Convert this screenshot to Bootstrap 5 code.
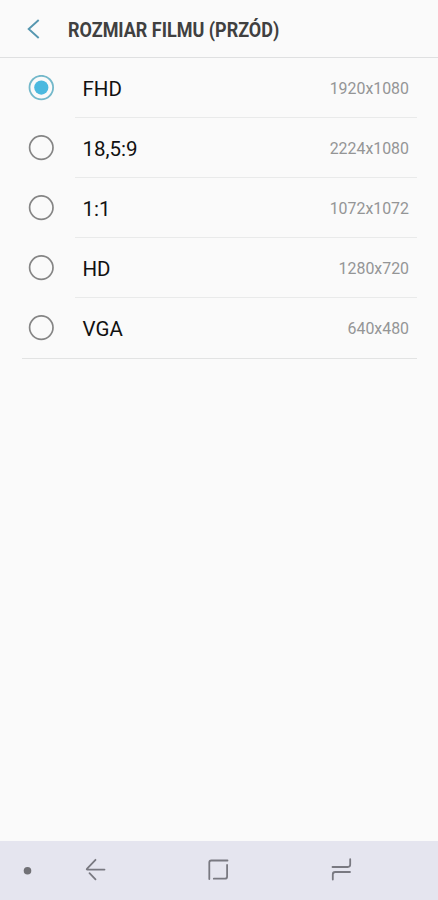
<!DOCTYPE html>
<html lang="pl">
<head>
<meta charset="utf-8">
<meta name="viewport" content="width=device-width, initial-scale=1">
<title>Rozmiar filmu (przód)</title>
<link href="https://cdn.jsdelivr.net/npm/bootstrap@5.3.0/dist/css/bootstrap.min.css" rel="stylesheet">
<style>
body { font-family: Roboto, "Liberation Sans", sans-serif; background: #fafafa; }
.topbar { height: 58px; border-bottom: 1px solid #dfe0e1; padding-left: 26px; }
.title { font-size: 20px; font-weight: 700; line-height: 24px; color: #404040; margin: 2px 0 0 27px; white-space: nowrap; transform: scaleX(.899); transform-origin: left center; }
.options { padding: 0 21px 0 22px; }
.option { height: 60px; }
.option:last-child { height: 61px; border-bottom: 1px solid #e2e3e3; }
.radio-icon { margin: 0 0 1px 6px; }
.option-body { margin-left: 21px; padding: 2px 8px 0 7.500px; border-bottom: 1px solid #e9eaea; }
.option:last-child .option-body { border-bottom: 0; }
.option-name { font-size: 20.500px; line-height: 28px; color: #111; }
.option-size { font-size: 15.900px; color: #949596; }
.sysbar { height: 59px; background: #e5e5ef; }
</style>
</head>
<body class="vh-100 d-flex flex-column overflow-hidden">
<header class="topbar d-flex align-items-center flex-shrink-0">
  <svg width="15" height="22" viewBox="0 0 15 22" fill="none" stroke="#5697b0" stroke-width="1.9"><path d="M12.7 2 2.7 11l10 9"/></svg>
  <h1 class="title">ROZMIAR FILMU (PRZÓD)</h1>
</header>
<main class="options flex-grow-1">
  <div class="option d-flex align-items-center">
    <svg class="radio-icon flex-shrink-0" width="26" height="26" viewBox="0 0 26 26"><circle cx="13.3" cy="12.600" r="11.8" fill="none" stroke="#73b8ca" stroke-width="1.8"/><circle cx="13.3" cy="12.600" r="7.1" fill="#4bb9df"/></svg>
    <div class="option-body d-flex flex-grow-1 h-100 align-items-center justify-content-between"><span class="option-name">FHD</span><span class="option-size">1920x1080</span></div>
  </div>
  <div class="option d-flex align-items-center">
    <svg class="radio-icon flex-shrink-0" width="26" height="26" viewBox="0 0 26 26"><circle cx="13.3" cy="12.600" r="11.7" fill="none" stroke="#858585" stroke-width="1.7"/></svg>
    <div class="option-body d-flex flex-grow-1 h-100 align-items-center justify-content-between"><span class="option-name">18,5:9</span><span class="option-size">2224x1080</span></div>
  </div>
  <div class="option d-flex align-items-center">
    <svg class="radio-icon flex-shrink-0" width="26" height="26" viewBox="0 0 26 26"><circle cx="13.3" cy="12.600" r="11.7" fill="none" stroke="#858585" stroke-width="1.7"/></svg>
    <div class="option-body d-flex flex-grow-1 h-100 align-items-center justify-content-between"><span class="option-name">1:1</span><span class="option-size">1072x1072</span></div>
  </div>
  <div class="option d-flex align-items-center">
    <svg class="radio-icon flex-shrink-0" width="26" height="26" viewBox="0 0 26 26"><circle cx="13.3" cy="12.600" r="11.7" fill="none" stroke="#858585" stroke-width="1.7"/></svg>
    <div class="option-body d-flex flex-grow-1 h-100 align-items-center justify-content-between"><span class="option-name">HD</span><span class="option-size">1280x720</span></div>
  </div>
  <div class="option d-flex align-items-center">
    <svg class="radio-icon flex-shrink-0" width="26" height="26" viewBox="0 0 26 26"><circle cx="13.3" cy="12.600" r="11.7" fill="none" stroke="#858585" stroke-width="1.7"/></svg>
    <div class="option-body d-flex flex-grow-1 h-100 align-items-center justify-content-between"><span class="option-name">VGA</span><span class="option-size">640x480</span></div>
  </div>
</main>
<footer class="sysbar flex-shrink-0">
  <svg class="d-block" width="438" height="59" viewBox="0 841 438 59" fill="none" stroke="#797981" stroke-width="1.8" stroke-linecap="round" stroke-linejoin="round">
    <circle cx="27.5" cy="870.8" r="3.8" fill="#717176" stroke="none"/>
    <path d="M95.5 859.8l-8.6 9.1q-.5.7.4.7H104.5M89.5 873.2l6 6.1"/>
    <path d="M209.3 879v-16.500q0-2 2-2H227.500M227.100 864.900v11.500q0 2.300-2.300 2.300H213.800"/>
    <path d="M332.500 867h15.300q2.400 0 2.400-2.400V859.200M350 872h-14.800q-2.400 0-2.400 2.400V879.600"/>
  </svg>
</footer>
<script src="https://cdn.jsdelivr.net/npm/bootstrap@5.3.0/dist/js/bootstrap.bundle.min.js"></script>
</body>
</html>
